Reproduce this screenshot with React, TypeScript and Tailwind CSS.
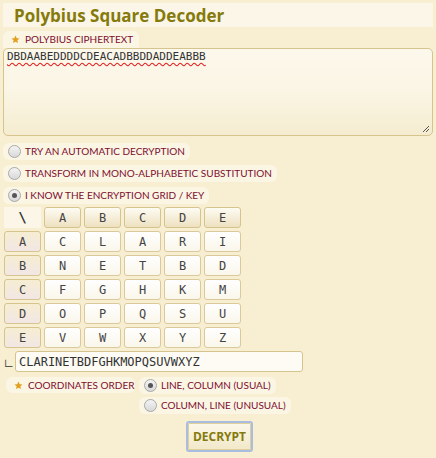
const cols = ["A", "B", "C", "D", "E"];
const grid = [
  ["C", "L", "A", "R", "I"],
  ["N", "E", "T", "B", "D"],
  ["F", "G", "H", "K", "M"],
  ["O", "P", "Q", "S", "U"],
  ["V", "W", "X", "Y", "Z"],
];

const Star = () => (
  <svg width="9" height="9" viewBox="0 0 10 10" className="shrink-0">
    <path d="M5 0.5l1.4 3 3.1 0.3-2.4 2.1 0.7 3.1L5 7.4 2.2 9l0.7-3.1L0.5 3.8l3.1-0.3z" fill="#e0a020" />
  </svg>
);

const Radio = ({ checked }: { checked?: boolean }) => (
  <span className="w-[13px] h-[13px] rounded-full border border-[#a9a9a9] bg-gradient-to-b from-[#f4f4f4] to-[#d8d8d8] flex items-center justify-center shrink-0">
    {checked && <span className="w-[5px] h-[5px] rounded-full bg-[#555]" />}
  </span>
);

const RadioRow = ({ label, checked }: { label: string; checked?: boolean }) => (
  <div className="h-[17px] self-start flex items-center gap-[4px] pl-[5px] pr-[5px] rounded-[6px] bg-[#fbf5e4] text-[#7d0e2e] text-[10px]">
    <Radio checked={checked} />
    <span>{label}</span>
  </div>
);

const App = () => {
  return (
    <div className="w-[436px] h-[458px] bg-[#f8eed2] px-[3px] pt-[3px] flex flex-col font-['Lato',sans-serif]">
      <div className="h-[24px] w-[430px] bg-[#fbf6e7] flex items-center pl-[11px]">
        <h1 className="text-[17px] font-bold text-[#857a0b] font-['Open_Sans',sans-serif] leading-none">Polybius Square Decoder</h1>
      </div>
      <div className="mt-[4px] h-[17px] self-start flex items-center gap-[5px] pl-[8px] pr-[6px] rounded-t-[6px] bg-[#fbf5e4] text-[#7d0e2e] text-[10px]">
        <Star />
        <span>POLYBIUS CIPHERTEXT</span>
      </div>
      <div className="h-[88px] w-[430px] border border-[#d6c48f] rounded-[5px] bg-gradient-to-b from-[#fcf8ec] via-[#faf5e4] to-[#f5ecd0] px-[3px] pt-[1px] relative text-[11px] leading-[14px]">
        <span className="block font-['DejaVu_Sans_Mono',monospace] text-[#333] underline decoration-wavy decoration-[#e02020] underline-offset-[2px]">DBDAABEDDDDCDEACADBBDDADDEABBB</span>
        <svg className="absolute right-[2px] bottom-[2px]" width="8" height="8" viewBox="0 0 8 8">
          <path d="M7 1L1 7M7 4L4 7" stroke="#555" strokeWidth="1" />
        </svg>
      </div>
      <div className="mt-[7px] flex flex-col gap-[5px]">
        <RadioRow label="TRY AN AUTOMATIC DECRYPTION" />
        <RadioRow label="TRANSFORM IN MONO-ALPHABETIC SUBSTITUTION" />
        <RadioRow label="I KNOW THE ENCRYPTION GRID / KEY" checked />
      </div>
      <div className="mt-[3px] ml-[1px] grid grid-cols-[37px_repeat(5,37px)] auto-rows-[21px] gap-[3px] font-['DejaVu_Sans_Mono',monospace] text-[12px] text-[#444]">
        <div className="flex items-center justify-center font-bold text-[14px] text-[#333] bg-[#fbf6e7]">\</div>
        {cols.map((c) => (
          <div key={c} className="flex items-center justify-center rounded-[3px] border border-[#d6c48f] bg-gradient-to-b from-[#fdfbf3] to-[#eee1c0]">{c}</div>
        ))}
        {grid.map((row, i) => (
          <>
            <div key={"h" + i} className="flex items-center justify-center rounded-[3px] border border-[#d6c48f] bg-gradient-to-b from-[#f6edd2] to-[#f2e7e4]">{cols[i]}</div>
            {row.map((l, j) => (
              <div key={i + "-" + j} className="flex items-center justify-center rounded-[3px] border border-[#d9c99b] bg-gradient-to-b from-white to-[#faf6ea]">{l}</div>
            ))}
          </>
        ))}
      </div>
      <div className="mt-[3px] flex items-center">
        <span className="w-[12px] text-[15px] text-[#555] pl-[1px] leading-none">∟</span>
        <div className="h-[21px] w-[288px] border border-[#d6c48f] rounded-[3px] bg-[#fdfbf3] flex items-center pl-[3px] font-['DejaVu_Sans_Mono',monospace] text-[12px] text-[#333]">CLARINETBDFGHKMOPQSUVWXYZ</div>
      </div>
      <div className="mt-[5px] flex gap-[4px]">
        <div className="h-[16px] w-[129px] ml-[3px] flex items-center gap-[5px] pl-[8px] rounded-[6px] bg-[#fbf5e4] text-[#7d0e2e] text-[10px]">
          <Star />
          <span>COORDINATES ORDER</span>
        </div>
        <div className="flex flex-col gap-[3px]">
          <RadioRow label="LINE, COLUMN (USUAL)" checked />
          <RadioRow label="COLUMN, LINE (UNUSUAL)" />
        </div>
      </div>
      <div className="mt-[7px] flex justify-center">
        <button className="w-[67px] h-[31px] ml-[3px] rounded-[3px] border-2 border-[#a9bde0] outline outline-1 outline-[#e0cf98] -outline-offset-[3px] bg-gradient-to-b from-[#fcf8ea] to-[#f2e8c9] text-[#857a0b] font-bold text-[12px] font-['Open_Sans',sans-serif]">DECRYPT</button>
      </div>
    </div>
  );
};

export default App;
